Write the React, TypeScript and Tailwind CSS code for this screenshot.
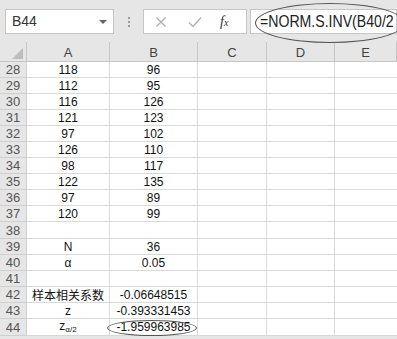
import React from "react"

const cols = ["A", "B", "C", "D", "E"]

type Row = { n: number; a?: React.ReactNode; b?: string; h: string; circled?: boolean }

const rows: Row[] = [
  { n: 28, a: "118", b: "96", h: "h-[16px]" },
  { n: 29, a: "112", b: "95", h: "h-[16px]" },
  { n: 30, a: "116", b: "126", h: "h-[16px]" },
  { n: 31, a: "121", b: "123", h: "h-[16px]" },
  { n: 32, a: "97", b: "102", h: "h-[16px]" },
  { n: 33, a: "126", b: "110", h: "h-[16px]" },
  { n: 34, a: "98", b: "117", h: "h-[16px]" },
  { n: 35, a: "122", b: "135", h: "h-[16px]" },
  { n: 36, a: "97", b: "89", h: "h-[16px]" },
  { n: 37, a: "120", b: "99", h: "h-[16px]" },
  { n: 38, h: "h-[17px]" },
  { n: 39, a: "N", b: "36", h: "h-[16px]" },
  { n: 40, a: "α", b: "0.05", h: "h-[16px]" },
  { n: 41, h: "h-[16px]" },
  {
    n: 42,
    a: <span className="font-['Noto_Sans_CJK_SC',sans-serif] text-[12px]">样本相关系数</span>,
    b: "-0.06648515",
    h: "h-[16px]",
  },
  { n: 43, a: "z", b: "-0.393331453", h: "h-[16px]" },
  {
    n: 44,
    a: (
      <span>
        z<span className="text-[8px] align-[-2px]">α/2</span>
      </span>
    ),
    b: "-1.959963985",
    h: "h-[17px]",
    circled: true,
  },
]

const grid = "grid grid-cols-[27px_83px_88px_69px_68px_62px]"

export default function App() {
  return (
    <div className="w-[397px] h-[339px] overflow-hidden bg-[#e6e6e6] font-['Liberation_Sans',Arial,sans-serif] text-[#111]">
      {/* formula bar */}
      <div className="flex items-start h-[42px] pt-[9px] pl-[5px]">
        <div className="relative w-[109px] h-[25px] bg-white border border-[#c6c6c6] flex items-center pl-[6px] text-[14px] text-[#333]">
          B44
          <span className="absolute right-[6px] top-[10px] w-0 h-0 border-l-[4px] border-r-[4px] border-t-[4px] border-l-transparent border-r-transparent border-t-[#666]" />
        </div>
        <div className="w-[29px] h-[25px] flex flex-col items-center justify-center gap-[2px]">
          <span className="w-[2px] h-[2px] bg-[#999]" />
          <span className="w-[2px] h-[2px] bg-[#999]" />
          <span className="w-[2px] h-[2px] bg-[#999]" />
        </div>
        <div className="w-[104px] h-[25px] bg-white border border-[#c6c6c6] flex items-center">
          <svg width="12" height="12" viewBox="0 0 12 12" className="ml-[11px]">
            <path d="M1.5 1.5L10.5 10.5M10.5 1.5L1.5 10.5" stroke="#b0b0b0" strokeWidth="1.4" fill="none" />
          </svg>
          <svg width="14" height="12" viewBox="0 0 14 12" className="ml-[21px]">
            <path d="M1 6.5L5 10.5L13 1.5" stroke="#b0b0b0" strokeWidth="1.4" fill="none" />
          </svg>
          <span className="ml-[18px] font-['Liberation_Serif',serif] italic text-[14px] text-[#333] leading-none">
            f<span className="text-[10px]">x</span>
          </span>
        </div>
        <div className="relative ml-[3px] flex-1 h-[25px] bg-white border border-[#c6c6c6] overflow-visible">
          <div className="absolute left-[9px] top-[1px] text-[17px] leading-[22px] text-[#222] origin-left scale-x-[0.83] whitespace-nowrap">
            =NORM.S.INV(B40/2
          </div>
          <div className="absolute left-[4px] -top-[7px] w-[150px] h-[40px] rounded-[50%] border border-[#555]" />
        </div>
      </div>

      {/* column headers */}
      <div className={`${grid} h-[20px] border-b border-[#c6c6c6]`}>
        <div className="relative border-r border-[#c6c6c6]">
          <span className="absolute right-[3px] bottom-[2px] w-0 h-0 border-l-[11px] border-t-[11px] border-l-transparent border-t-transparent border-b-0 border-r-0 [border-bottom:11px_solid_#bdbdbd]" />
        </div>
        {cols.map((c) => (
          <div key={c} className="flex items-end justify-center pb-[2px] border-r border-[#c6c6c6] text-[13px] text-[#444] leading-none">
            {c}
          </div>
        ))}
      </div>

      {/* rows */}
      {rows.map((r) => (
        <div key={r.n} className={`${grid} ${r.h} text-[12px] leading-none`}>
          <div className="flex items-center justify-center border-r border-b border-[#cfcfcf] text-[13px] text-[#555]">
            {r.n}
          </div>
          <div className="flex items-center justify-center bg-white border-r border-b border-[#d9d9d9]">{r.a}</div>
          <div className="relative flex items-center justify-center bg-white border-r border-b border-[#d9d9d9]">
            {r.b}
            {r.circled && (
              <span className="absolute left-[-3px] top-[1px] w-[90px] h-[16px] rounded-[50%] border border-[#555]" />
            )}
          </div>
          <div className="bg-white border-r border-b border-[#d9d9d9]" />
          <div className="bg-white border-r border-b border-[#d9d9d9]" />
          <div className="bg-white border-b border-[#d9d9d9]" />
        </div>
      ))}
    </div>
  )
}
